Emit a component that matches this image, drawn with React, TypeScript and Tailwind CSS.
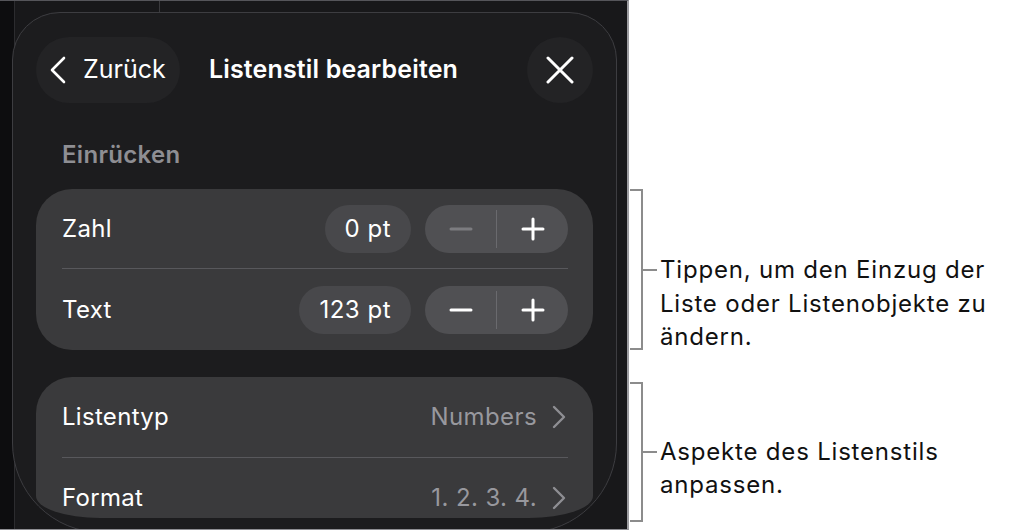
import React from "react";

function ChevronLeft() {
  return (
    <svg width="18" height="28" viewBox="0 0 18 28" fill="none">
      <polyline points="15,2 3,14 15,26" stroke="white" strokeWidth="2.6" strokeLinecap="round" strokeLinejoin="round" />
    </svg>
  );
}

function CloseIcon() {
  return (
    <svg width="28" height="28" viewBox="0 0 28 28" fill="none">
      <path d="M2 2 L26 26 M26 2 L2 26" stroke="white" strokeWidth="3" strokeLinecap="round" />
    </svg>
  );
}

function ChevronRight() {
  return (
    <svg width="14" height="24" viewBox="0 0 14 24" fill="none">
      <polyline points="2,2 12,12 2,22" stroke="#8e8e93" strokeWidth="2.4" strokeLinecap="round" strokeLinejoin="round" />
    </svg>
  );
}

function Minus({ disabled }: { disabled?: boolean }) {
  return (
    <svg width="24" height="24" viewBox="0 0 24 24" fill="none">
      <path d="M2 12 L22 12" stroke={disabled ? "#7c7c80" : "white"} strokeWidth="3" strokeLinecap="round" />
    </svg>
  );
}

function Plus() {
  return (
    <svg width="24" height="24" viewBox="0 0 24 24" fill="none">
      <path d="M2 12 L22 12 M12 2 L12 22" stroke="white" strokeWidth="3" strokeLinecap="round" />
    </svg>
  );
}

function StepperRow({ label, value, minusDisabled }: { label: string; value: string; minusDisabled?: boolean }) {
  return (
    <div className="flex items-center h-full">
      <span className="text-[24px] tracking-[0.3px] text-white">{label}</span>
      <div className="ml-auto h-[48px] px-[20px] rounded-full bg-[#48484b] flex items-center text-[24px] tracking-[0.5px] text-white">
        {value}
      </div>
      <div className="ml-[14px] w-[143px] h-[48px] rounded-full bg-[#505053] flex items-center">
        <div className="flex-1 flex items-center justify-center">
          <Minus disabled={minusDisabled} />
        </div>
        <div className="w-px h-[38px] bg-[#6a6a6e]" />
        <div className="flex-1 flex items-center justify-center">
          <Plus />
        </div>
      </div>
    </div>
  );
}

function NavRow({ label, value }: { label: string; value: string }) {
  return (
    <div className="flex items-center h-[80px] shrink-0">
      <span className="text-[24px] tracking-[0.3px] text-white">{label}</span>
      <span className="ml-auto text-[24px] tracking-[0.4px] text-[#98989e]">{value}</span>
      <span className="ml-[15px] mr-[2px] flex items-center">
        <ChevronRight />
      </span>
    </div>
  );
}

function Panel() {
  return (
    <div className="absolute left-[12px] top-[11px] w-[605px] h-[521px] rounded-t-[48px] rounded-b-[90px] border border-[#3d3d41] bg-[#1c1c1e] px-[23px] pt-[24px]">
      {/* header */}
      <div className="flex items-center h-[66px]">
        <div className="h-[66px] w-[144px] rounded-full bg-[#232325] flex items-center pl-[13px]">
          <ChevronLeft />
          <span className="ml-[16px] text-[25px] text-white">Zurück</span>
        </div>
        <span className="ml-[29px] text-[25px] tracking-[0.15px] font-semibold text-white">Listenstil bearbeiten</span>
        <div className="ml-auto w-[66px] h-[66px] rounded-full bg-[#232325] flex items-center justify-center">
          <CloseIcon />
        </div>
      </div>

      <div className="mt-[38px] pl-[26px] text-[24px] leading-[28px] tracking-[0.3px] font-semibold text-[#8e8e93]">Einrücken</div>

      {/* indent card */}
      <div className="mt-[20px] rounded-[36px] bg-[#3a3a3c] px-[26px] pr-[25px]">
        <div className="h-[79px]">
          <StepperRow label="Zahl" value="0 pt" minusDisabled />
        </div>
        <div className="h-px bg-[#58585c]" />
        <div className="h-[81px]">
          <StepperRow label="Text" value="123 pt" />
        </div>
      </div>

      {/* list style card */}
      <div className="mt-[27px] h-[141px] overflow-hidden rounded-tl-[36px] rounded-tr-[36px] rounded-bl-[64px_22px] rounded-br-[64px_22px] bg-[#3a3a3c] px-[26px] pr-[25px] flex flex-col">
        <NavRow label="Listentyp" value="Numbers" />
        <div className="h-px shrink-0 bg-[#58585c]" />
        <NavRow label="Format" value="1. 2. 3. 4." />
      </div>
    </div>
  );
}

function Callout({ height, offset, lines }: { height: number; offset: string; lines: string[] }) {
  return (
    <div className="flex">
      <div
        className="w-[13px] border-y-2 border-r-2 border-[#8c8c8c] shrink-0"
        style={{ height }}
      />
      <div className={`flex items-start ${offset}`}>
        <div className="w-[14px] h-[2px] mt-[16px] bg-[#8c8c8c] shrink-0" />
        <p className="ml-[3px] text-[24px] leading-[33.5px] tracking-[0.8px] text-[#111111] whitespace-nowrap">
          {lines.map((l, i) => (
            <React.Fragment key={i}>
              {l}
              {i < lines.length - 1 && <br />}
            </React.Fragment>
          ))}
        </p>
      </div>
    </div>
  );
}

export default function App() {
  return (
    <div className="flex w-[1025px] h-[531px] bg-white overflow-hidden font-['Inter','Noto_Sans',sans-serif]">
      {/* device frame */}
      <div className="relative w-[629px] h-[530px] shrink-0 overflow-hidden border-t border-b border-r-2 border-t-[#55555a] border-b-[#8e8e93] border-r-[#9c9ca0] bg-[#18181a] flex">
        <div className="w-[15px] h-full bg-[#0d0d0f] border-r border-[#2c2c2f]" />
        <div className="flex-1">
          <div className="ml-[144px] w-px h-[12px] bg-[#3a3a3d]" />
        </div>
        <Panel />
      </div>

      {/* callouts */}
      <div className="flex-1 pl-px pt-[189px]">
        <Callout
          height={161}
          offset="mt-[64px]"
          lines={["Tippen, um den Einzug der", "Liste oder Listenobjekte zu", "ändern."]}
        />
        <div className="mt-[28px]">
          <Callout height={140} offset="mt-[53px]" lines={["Aspekte des Listenstils", "anpassen."]} />
        </div>
      </div>
    </div>
  );
}
